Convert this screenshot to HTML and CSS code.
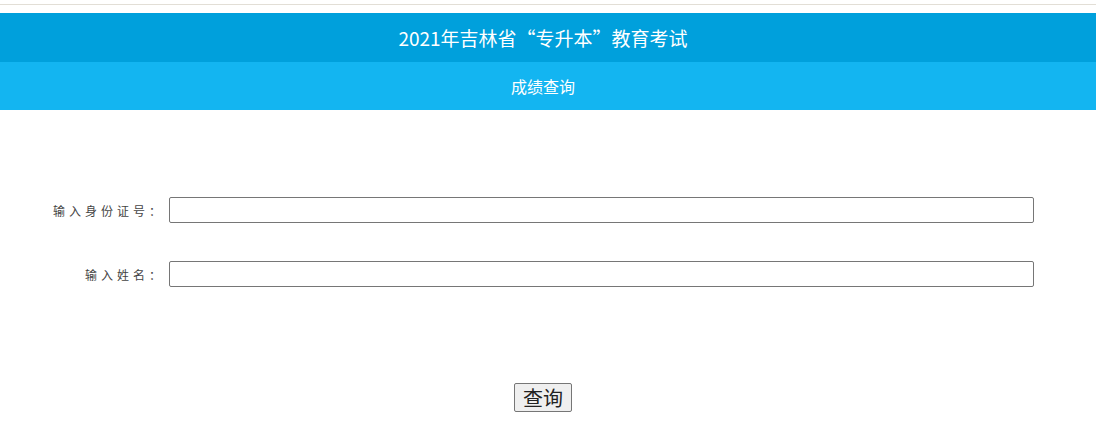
FILE: index.html
```html
<!DOCTYPE html>
<html lang="zh-CN">
<head>
    <meta charset="UTF-8">
    <title>成绩查询</title>
    <link rel="stylesheet" href="styles.css">
</head>
<body>
    <div class="topline"></div>

    <!-- 标题栏 -->
    <div class="header">2021年吉林省“专升本”教育考试</div>
    <div class="subheader">成绩查询</div>

    <form class="query-form" onsubmit="return false;">
        <div class="row">
            <label class="label" for="sfzh">输入身份证号：</label>
            <input class="text-input" type="text" id="sfzh">
        </div>
        <div class="row">
            <label class="label" for="xm">输入姓名：</label>
            <input class="text-input" type="text" id="xm">
        </div>
        <div class="actions">
            <button class="btn" type="submit">查询</button>
        </div>
    </form>
</body>
</html>
```

FILE: styles.css
```css
html, body {
    margin: 0;
    background-color: #fff;
    font-family: "Microsoft YaHei", "Noto Sans CJK SC", sans-serif;
}

.topline {
    height: 4px;
    border-bottom: 1px solid #e2ded6;
    margin-bottom: 8px;
}

.header {
    height: 49px;
    line-height: 49px;
    text-align: center;
    color: #fff;
    font-size: 19px;
    padding-right: 10px;
    background-color: #00a0dc;
    box-shadow: 0 1px 1px rgba(0, 0, 0, 0.08);
}

.subheader {
    height: 48px;
    line-height: 48px;
    text-align: center;
    color: #fff;
    font-size: 16px;
    padding-right: 10px;
    background-color: #13b5f1;
}

.query-form {
    padding-top: 87px;
}

.row {
    display: flex;
    align-items: center;
    height: 26px;
    margin-bottom: 38px;
}

.label {
    width: 165px;
    text-align: right;
    font-family: "SimSun", "Noto Sans CJK SC", serif;
    font-size: 12px;
    letter-spacing: 4px;
    color: #444;
}

.text-input {
    width: 865px;
    height: 26px;
    box-sizing: border-box;
    margin: 0 0 0 4px;
    border: 1px solid #767676;
    border-radius: 2px;
    padding: 0 4px;
}

.actions {
    text-align: center;
    padding-top: 58px;
}

.btn {
    font-family: "Noto Sans CJK SC", sans-serif;
    font-size: 20px;
    line-height: 27px;
    padding: 0 8px;
    color: #222;
    background-color: #efefef;
    border: 1px solid #767676;
    border-radius: 2px;
    margin-left: -10px;
}
```
